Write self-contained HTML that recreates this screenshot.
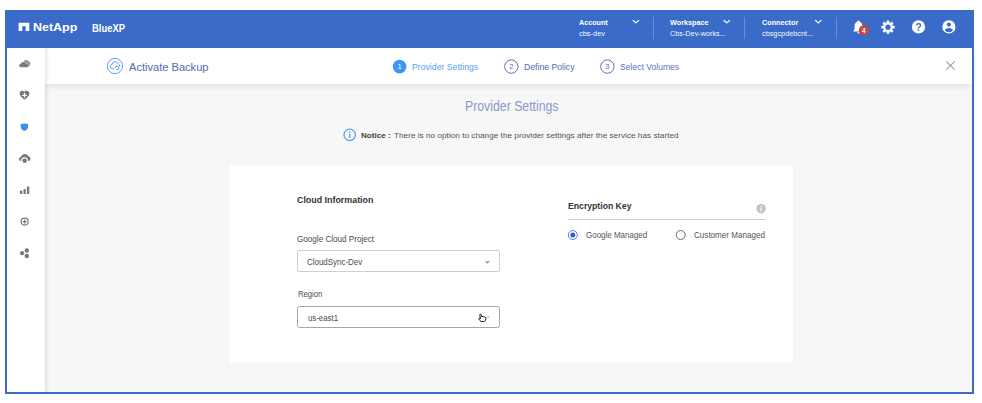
<!DOCTYPE html>
<html><head><meta charset="utf-8"><title>BlueXP</title>
<style>
*{box-sizing:border-box;margin:0;padding:0}
html,body{width:982px;height:403px;background:#fff;overflow:hidden}
body{font-family:"Liberation Sans",sans-serif;position:relative;color:#404040}
.a{position:absolute}
.t{position:absolute;white-space:nowrap;line-height:1;transform-origin:0 50%}
#bg{left:5px;top:10px;width:969px;height:384px;background:#f7f7f7}
#frame{left:5px;top:10px;width:969px;height:384px;border:2px solid #3c6bc7;pointer-events:none}
#hdr{left:5px;top:10px;width:969px;height:38px;background:#3a6bc8}
#side{left:7px;top:48px;width:38px;height:344px;background:#fff;box-shadow:1px 0 4px rgba(0,0,0,.15)}
#wiz{left:45px;top:48px;width:927px;height:36px;background:#fff;box-shadow:0 2px 7px rgba(0,0,0,.10)}
#card{left:230px;top:165px;width:563.4px;height:198.3px;background:#fff}
.vd{width:1px;height:22px;top:17px;background:rgba(255,255,255,.24)}
.sel{left:297px;width:203px;height:22px;border:1px solid #cfcfcf;border-radius:2px;background:#fff}
.step{width:13px;height:13px;border-radius:50%;top:60px;font-size:7px;line-height:11px;text-align:center}

</style></head><body>
<div id="bg" class="a"></div>
<div id="card" class="a"></div>
<div id="wiz" class="a"></div>
<div id="side" class="a"></div>
<div id="hdr" class="a"></div>
<div id="frame" class="a"></div>
<div class="a vd" style="left:653px"></div>
<div class="a vd" style="left:744px"></div>
<div class="a vd" style="left:835.5px"></div>
<div class="a sel" style="top:250px"></div>
<div class="a sel" style="top:305.5px;border-color:#a6a6a6;border-width:1.5px;border-radius:2.5px"></div>
<div class="a" style="left:568px;top:219px;width:197.5px;height:1px;background:#cdcdcd"></div>
<svg class="a" style="left:0;top:0" width="982" height="403" viewBox="0 0 982 403" font-family="'Liberation Sans',sans-serif">
  <!-- NetApp logo mark -->
  <path d="M18.6 22.8h10.7v8.1h-3.6v-4.6h-3.5v4.6h-3.6z" fill="#fff"/>
  <!-- header chevrons -->
  <g fill="none" stroke="#fff" stroke-width="1.2" stroke-linecap="round" stroke-linejoin="round">
    <path d="M633.2 20.5l2.700 2.400 2.700-2.400"/>
    <path d="M724.100 20.500l2.700 2.400 2.700-2.400"/>
    <path d="M815.600 20.500l2.700 2.400 2.700-2.400"/>
  </g>
  <!-- bell -->
  <path d="M858.500 20.400c.6 0 1 .4 1 1 1.900.6 2.900 2.300 2.900 4.500v3.400l1.200 1.400v.7h-10.200v-.7l1.200-1.400v-3.400c0-2.200 1-3.900 2.900-4.500 0-.6.400-1 1-1zM857.100 32.200h2.800a1.400 1.400 0 0 1-2.800 0z" fill="#fff"/>
  <circle cx="863.800" cy="30.300" r="4.900" fill="#d8432f"/>
  <text x="863.800" y="32.600" font-size="6.400" font-weight="700" fill="#fff" text-anchor="middle">4</text>
  <!-- gear -->
  <g transform="translate(888 27.200)">
    <g fill="#fff">
      <rect x="-1.350" y="-6.600" width="2.700" height="13.200" rx=".4"/>
      <rect x="-1.350" y="-6.600" width="2.700" height="13.200" rx=".4" transform="rotate(45)"/>
      <rect x="-1.350" y="-6.600" width="2.700" height="13.200" rx=".4" transform="rotate(90)"/>
      <rect x="-1.350" y="-6.600" width="2.700" height="13.200" rx=".4" transform="rotate(135)"/>
      <circle r="4.700"/>
    </g>
    <circle r="2.700" fill="#3b6bc8"/>
  </g>
  <!-- help -->
  <circle cx="918.500" cy="26.900" r="6.600" fill="#fff"/>
  <text x="918.500" y="30.700" font-size="10.500" font-weight="700" fill="#3b6bc8" text-anchor="middle">?</text>
  <!-- user -->
  <circle cx="948.900" cy="26.900" r="6.600" fill="#fff"/>
  <circle cx="948.900" cy="24.600" r="2.100" fill="#3b6bc8"/>
  <path d="M944.700 30.300c.9-1.700 2.400-2.400 4.200-2.400s3.300.7 4.200 2.400c-1 1.300-2.500 2-4.200 2s-3.200-.7-4.200-2z" fill="#3b6bc8"/>

  <!-- sidebar icons -->
  <g fill="#7a7a7a">
    <!-- cloud -->
    <path d="M23.600 60.900c1.500-1.300 3.900-1.200 5 .400 1.300.300 2 1.600 1.600 2.800.200 1-.300 1.900-1.200 2.300l-3-2.600z" fill="#8f919c"/>
    <path d="M21.100 67.500c-1.300 0-2.200-.800-2.200-1.900 0-1 .700-1.700 1.700-1.800.400-1.300 1.500-2.100 2.900-2.100 1.300 0 2.400.700 2.800 1.800 1.500.100 2.600 1 2.600 2.100 0 1.100-1 1.900-2.300 1.900z" stroke="#fff" stroke-width=".5"/>
    <!-- heart plus -->
    <path d="M24.500 99.800c-3-2.300-4.900-4-4.900-6.200 0-1.700 1.200-2.900 2.700-2.900.9 0 1.700.4 2.200 1.200.5-.8 1.300-1.200 2.200-1.200 1.500 0 2.700 1.200 2.700 2.900 0 2.200-1.900 3.900-4.900 6.200z"/>
    <path d="M23.900 93h1.200v1.700h1.700v1.200h-1.700v1.700h-1.200v-1.700h-1.700v-1.200h1.700z" fill="#fff"/>
    <!-- cloud lock -->
    <path d="M21.400 161.300c-1.400 0-2.400-.900-2.400-2.200 0-1.100.800-2 1.900-2.100.300-1.800 1.900-3.100 3.900-3.100 1.700 0 3.100.900 3.700 2.400 1.200.300 2 1.300 2 2.500 0 1.400-1.100 2.500-2.500 2.500z"/>
    <path d="M21.600 162.200v-1.400a3 3 0 0 1 6 0v1.400" fill="none" stroke="#fff" stroke-width="1.200"/>
    <rect x="23" y="159.300" width="3.200" height="3.800" rx="1.300"/>
    <!-- bars -->
    <rect x="20" y="190.600" width="2.300" height="3.500" rx=".4"/>
    <rect x="23.500" y="188.900" width="2.300" height="5.200" rx=".4"/>
    <rect x="26.900" y="186.400" width="2.400" height="7.700" rx=".4"/>
    <!-- dots -->
    <circle cx="22.100" cy="253.200" r="2.100"/>
    <circle cx="26.800" cy="250.500" r="2.200"/>
    <circle cx="26.800" cy="256" r="2.200"/>
  </g>
  <!-- shield -->
  <path d="M20.700 123.900c1.200-.3 2.500-.5 3.700-.5s2.500.2 3.700.5v2.800c0 1.900-1.300 3.400-3.700 4.300-2.400-.9-3.700-2.400-3.700-4.300z" fill="#3d8cf2"/>
  <!-- circle plus -->
  <circle cx="24.600" cy="221.600" r="3.500" fill="none" stroke="#7a7a7a" stroke-width="1.200"/>
  <path d="M24.600 219.700v3.800M22.700 221.600h3.800" stroke="#7a7a7a" stroke-width="1.300"/>

  <!-- wizard icon -->
  <circle cx="114.950" cy="66.050" r="7.650" fill="none" stroke="#5aa3f6" stroke-width="1"/>
  <path d="M114 68.700H112.400A2.150 2.150 0 0 1 112 64.450A3.150 3.150 0 0 1 118.100 63.800A2.400 2.400 0 0 1 119.900 66.300" fill="none" stroke="#4f8ff0" stroke-width=".9" stroke-linecap="round" stroke-linejoin="round"/>
  <path d="M115.100 67.500a1.900 1.900 0 1 1 1.400 2.300" fill="none" stroke="#5d7fe6" stroke-width=".9" stroke-linecap="round"/>
  <!-- steps -->
  <circle cx="399.600" cy="66.600" r="6.800" fill="#3d95f5"/>
  <text x="399.500" y="69.300" font-size="7.600" fill="#fff" text-anchor="middle">1</text>
  <circle cx="511.300" cy="66.600" r="6.700" fill="#fff" stroke="#5d6fbd" stroke-width="1"/>
  <text x="511.300" y="69.200" font-size="7.400" fill="#5566b5" text-anchor="middle">2</text>
  <circle cx="607.400" cy="66.600" r="6.700" fill="#fff" stroke="#5d6fbd" stroke-width="1"/>
  <text x="607.400" y="69.200" font-size="7.400" fill="#5566b5" text-anchor="middle">3</text>
  <!-- close -->
  <path d="M946.200 61.300l8.600 8.400M954.800 61.300l-8.600 8.400" stroke="#a0a0a0" stroke-width="1.150"/>
  <!-- notice icon -->
  <circle cx="349.700" cy="134.900" r="5.700" fill="none" stroke="#4c9bf5" stroke-width="1.200"/>
  <path d="M349.700 133.900v4.100" stroke="#4c9bf5" stroke-width="1.300"/>
  <circle cx="349.700" cy="132.100" r=".8" fill="#4c9bf5"/>
  <!-- select arrow -->
  <path d="M484.700 261.200h5.400l-2.700 2.600z" fill="#9a9a9a"/>
  <path d="M486.400 316.600h3.600l-1.800 1.500z" fill="#a8a8a8"/>
  <!-- hand cursor -->
  <path d="M480 314.300c.6-.4 1.300 0 1.400.6l.3 1.600c1-.3 1.500 0 1.700.3.700-.2 1.200 0 1.400.4.800 0 1.200.5 1.100 1.200l-.3 1.700c-.2.900-.9 1.500-1.800 1.500h-2c-.7 0-1.300-.3-1.700-.9l-1.200-1.600c-.4-.6.300-1.300 1-.9l.6.400-.7-3.500c-.1-.3 0-.6.200-.8z" fill="#fff" stroke="#111" stroke-width="1" stroke-linejoin="round"/>
  <!-- info -->
  <circle cx="761.100" cy="208.700" r="4.800" fill="#c4c4c4"/>
  <rect x="760.500" y="207.900" width="1.200" height="3.400" fill="#fff"/>
  <circle cx="761.100" cy="206.500" r=".7" fill="#fff"/>
  <!-- radios -->
  <circle cx="572.800" cy="235" r="4.500" fill="#fff" stroke="#5a7be0" stroke-width="1"/>
  <circle cx="572.800" cy="235" r="2.500" fill="#2b63c9"/>
  <circle cx="680.700" cy="235" r="4.500" fill="#fff" stroke="#6a6a6a" stroke-width="1"/>
</svg>

<div class="t" style="left:33.2px;top:22px;font-size:11.4px;font-weight:700;color:#fff;transform:scaleX(1.0938)">NetApp</div>
<div class="t" style="left:91.7px;top:24px;font-size:10px;font-weight:700;color:#fff;transform:scaleX(0.9481)">BlueXP</div>
<div class="t" style="left:579.0px;top:19px;font-size:7.6px;font-weight:700;color:#fff;transform:scaleX(0.9449)">Account</div>
<div class="t" style="left:579.0px;top:30px;font-size:7.2px;font-weight:400;color:#f4f7fd;transform:scaleX(1.0329)">cbs-dev</div>
<div class="t" style="left:670.4px;top:19px;font-size:7.6px;font-weight:700;color:#fff;transform:scaleX(0.9557)">Workspace</div>
<div class="t" style="left:670.4px;top:30px;font-size:7.2px;font-weight:400;color:#f4f7fd;transform:scaleX(1.0122)">Cbs-Dev-works...</div>
<div class="t" style="left:761.8px;top:19px;font-size:7.6px;font-weight:700;color:#fff;transform:scaleX(0.9534)">Connector</div>
<div class="t" style="left:761.8px;top:30px;font-size:7.2px;font-weight:400;color:#f4f7fd;transform:scaleX(1.0167)">cbsgcpdebcnt...</div>
<div class="t" style="left:129.1px;top:62px;font-size:11px;font-weight:400;color:#5566b5;transform:scaleX(1.0079)">Activate Backup</div>
<div class="t" style="left:411.5px;top:63px;font-size:8.8px;font-weight:400;color:#5a9ff2;transform:scaleX(0.9881)">Provider Settings</div>
<div class="t" style="left:523.5px;top:63px;font-size:8.8px;font-weight:400;color:#5566b5;transform:scaleX(0.9836)">Define Policy</div>
<div class="t" style="left:619.6px;top:63px;font-size:8.8px;font-weight:400;color:#5f6fc4;transform:scaleX(0.9746)">Select Volumes</div>
<div class="t" style="left:464.7px;top:99px;font-size:14px;font-weight:400;color:#8b98cc;transform:scaleX(0.8770)">Provider Settings</div>
<div class="t" style="left:360.8px;top:132px;font-size:7.7px;font-weight:700;color:#404040;transform:scaleX(1.0495)">Notice :</div>
<div class="t" style="left:394.2px;top:132px;font-size:7.7px;font-weight:400;color:#555;transform:scaleX(1.0707)">There is no option to change the provider settings after the service has started</div>
<div class="t" style="left:297.4px;top:195px;font-size:9.4px;font-weight:700;color:#333;transform:scaleX(0.9465)">Cloud Information</div>
<div class="t" style="left:297.4px;top:235px;font-size:8.4px;font-weight:400;color:#4a4a4a;transform:scaleX(0.9685)">Google Cloud Project</div>
<div class="t" style="left:307.4px;top:258px;font-size:8.4px;font-weight:400;color:#4a4a4a;transform:scaleX(0.9487)">CloudSync-Dev</div>
<div class="t" style="left:297.7px;top:290px;font-size:8.4px;font-weight:400;color:#4a4a4a;transform:scaleX(0.9154)">Region</div>
<div class="t" style="left:307.9px;top:314px;font-size:8.4px;font-weight:400;color:#4a4a4a;transform:scaleX(0.9339)">us-east1</div>
<div class="t" style="left:568.2px;top:202px;font-size:9.2px;font-weight:700;color:#333;transform:scaleX(0.9423)">Encryption Key</div>
<div class="t" style="left:586.2px;top:232px;font-size:8.2px;font-weight:400;color:#555;transform:scaleX(0.9741)">Google Managed</div>
<div class="t" style="left:693.9px;top:232px;font-size:8.2px;font-weight:400;color:#555;transform:scaleX(0.9874)">Customer Managed</div>
</body></html>
